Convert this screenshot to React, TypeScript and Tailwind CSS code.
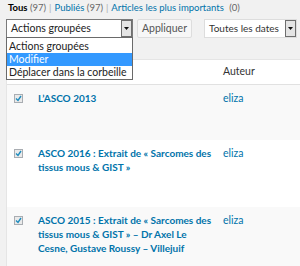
const font = { fontFamily: 'Lato, "Open Sans", sans-serif' };

const Check = () => (
  <div className="w-[9px] h-[9px] border border-[#a9adb2] bg-[#eaeaea] flex items-center justify-center shrink-0">
    <svg width="7" height="7" viewBox="0 0 7 7">
      <path d="M1 3.5 L3 5.5 L6 1" fill="none" stroke="#1e8cbe" strokeWidth="1.4" />
    </svg>
  </div>
);

const Arrow = () => (
  <div className="w-[11px] h-[17px] border border-[#6e6e6e] bg-[#e4e4e4] flex items-center justify-center shrink-0">
    <svg width="5" height="3" viewBox="0 0 5 3">
      <path d="M0 0 H5 L2.5 3 Z" fill="#111" />
    </svg>
  </div>
);

const rows = [
  { title: ["L\u2019ASCO 2013"], h: "h-[55px]", bg: "bg-[#f9f9f9]" },
  { title: ["ASCO 2016 : Extrait de « Sarcomes des", "tissus mous & GIST »"], h: "h-[67px]", bg: "bg-white" },
  { title: ["ASCO 2015 : Extrait de « Sarcomes des", "tissus mous & GIST » \u2013 Dr Axel Le", "Cesne, Gustave Roussy \u2013 Villejuif"], h: "h-[81px]", bg: "bg-[#f9f9f9]" },
];

export default function App() {
  return (
    <div className="w-[300px] h-[266px] bg-[#f1f1f1] overflow-hidden text-[11px] text-[#444]" style={font}>
      <div className="pl-[8px] pt-[1px] h-[16px] leading-[14px] whitespace-nowrap text-[9.5px] text-[#0073aa]">
        <span className="font-bold text-[#000]">Tous</span> <span className="text-[#666]">(97)</span>
        <span className="text-[#aaa] px-[3px]">|</span>
        Publiés <span className="text-[#666]">(97)</span>
        <span className="text-[#aaa] px-[3px]">|</span>
        Articles les plus importants <span className="text-[#666] pl-[3px]">(0)</span>
      </div>
      <div className="relative flex items-center h-[21px] mt-[2px] pl-[6px]">
        <div className="relative w-[127px] h-[19px] border border-[#7a7a7a] bg-white flex items-center justify-between">
          <span className="pl-[4px] text-[#222] whitespace-nowrap text-[10.5px]">Actions groupées</span>
          <Arrow />
          <div className="absolute left-[-1px] top-[17px] w-[127px] border border-[#6a6a6a] bg-white z-10 pt-[2px] text-[#222] text-[10.5px] leading-[13px] whitespace-nowrap">
            <div className="px-[2px] h-[13px]">Actions groupées</div>
            <div className="px-[2px] h-[13px] bg-[#3399ff] text-white">Modifier</div>
            <div className="px-[2px] h-[13px]">Déplacer dans la corbeille</div>
          </div>
        </div>
        <div className="ml-[4px] w-[55px] h-[19px] border border-[#ddd] bg-[#f7f7f7] rounded-[2px] flex items-center justify-center text-[10.5px] text-[#555]">
          Appliquer
        </div>
        <div className="ml-[12px] w-[93px] h-[19px] border border-[#ddd] bg-white flex items-center justify-between">
          <span className="pl-[4px] text-[#333] whitespace-nowrap text-[10px]">Toutes les dates</span>
          <Arrow />
        </div>
      </div>
      <div className="ml-[6px] mt-[20px] w-[300px] border-l border-t border-[#e5e5e5] bg-white">
        <div className="h-[25px] border-b border-[#e1e1e1] flex items-center">
          <span className="ml-[216px] text-[10.5px] text-[#333]">Auteur</span>
        </div>
        {rows.map((r, i) => (
          <div key={i} className={`${r.h} ${r.bg} flex items-start pt-[6px]`}>
            <div className="w-[31px] pl-[7px] pt-[3px] shrink-0">
              <Check />
            </div>
            <div className="w-[185px] shrink-0 leading-[14px] text-[10px] font-bold text-[#0073aa]">
              {r.title.map((t, j) => (
                <div key={j} className="whitespace-nowrap">{t}</div>
              ))}
            </div>
            <div className="leading-[14px] text-[10.5px] text-[#0073aa]">eliza</div>
          </div>
        ))}
      </div>
    </div>
  );
}
